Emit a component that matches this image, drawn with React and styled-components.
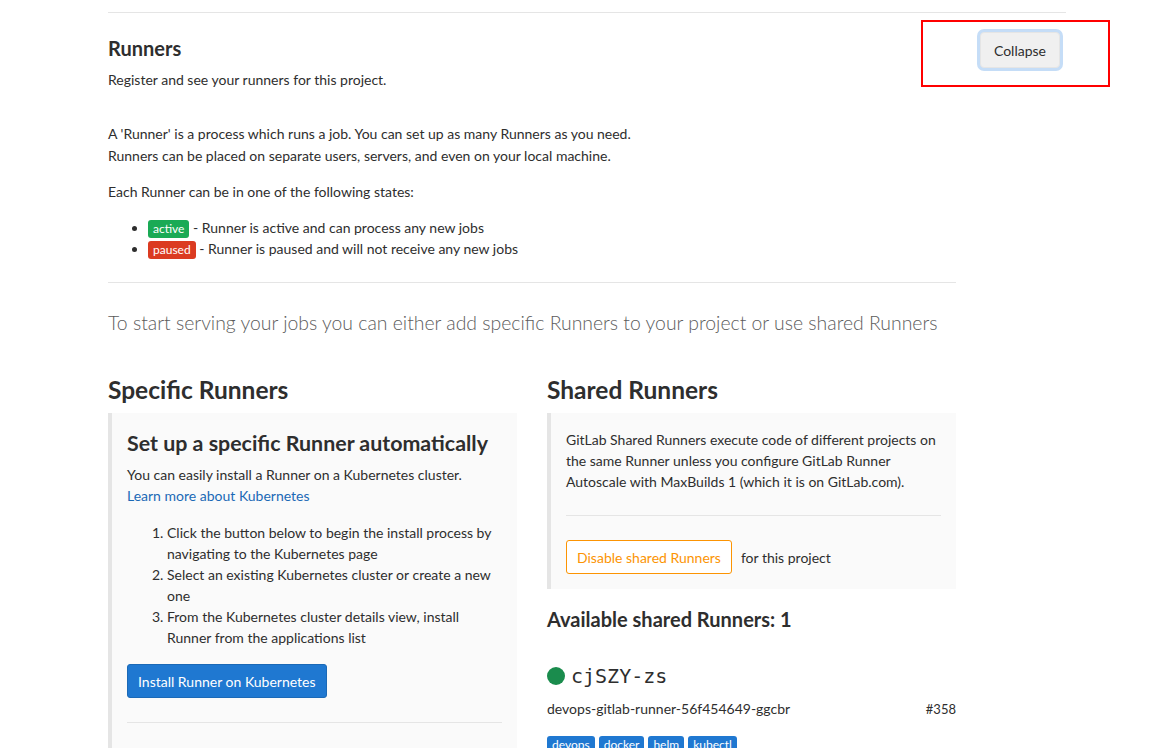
import React from 'react';
import styled, { createGlobalStyle } from 'styled-components';

const GlobalStyle = createGlobalStyle`
  body {
    margin: 0;
    background: #ffffff;
    font-family: Lato, "Noto Sans", sans-serif;
    font-size: 14px;
    color: #2e2e2e;
  }
`;

const Page = styled.div`
  width: 958px;
  margin: 0 0 0 108px;
  padding-top: 12px;
`;

const Section = styled.section`
  position: relative;
  border-top: 1px solid #e5e5e5;
`;

const SectionHeader = styled.div`
  display: flex;
  justify-content: space-between;
  align-items: flex-start;
  padding-top: 21px;
`;

const SectionTitle = styled.h4`
  margin: 0;
  font-size: 20px;
  font-weight: 700;
  line-height: 28px;
`;

const SectionDesc = styled.p`
  margin: 8px 0 0 0;
  line-height: 20px;
`;

const CollapseBtn = styled.button`
  margin: -2px 6px 0 0;
  height: 36px;
  padding: 0 13px;
  font-family: inherit;
  font-size: 14px;
  color: #2e2e2e;
  background: #f0f0f0;
  border: 1px solid #e5e5e5;
  border-radius: 4px;
  box-shadow: 0 0 0 3px #c5ddf7;
`;

const Annotation = styled.div`
  position: absolute;
  left: 813px;
  top: 7px;
  width: 185px;
  height: 63px;
  border: 2px solid #ff0000;
  pointer-events: none;
`;

const Content = styled.div`
  width: 848px;
  padding-top: 33px;
`;

const Para = styled.p`
  margin: 0 0 14px 0;
  line-height: 22px;
`;

const StateList = styled.ul`
  margin: 0;
  padding-left: 40px;
  line-height: 21px;
`;

const Badge = styled.span`
  display: inline-block;
  padding: 0 5px;
  border-radius: 3px;
  color: #ffffff;
  font-size: 12px;
  line-height: 18px;
  background: ${p => p.$color};
`;

const Divider = styled.hr`
  border: 0;
  border-top: 1px solid #e5e5e5;
  margin: ${p => p.$margin || '24px 0'};
`;

const Lead = styled.p`
  margin: 0;
  font-size: 19.4px;
  font-weight: 300;
  color: #5c5c5c;
  line-height: 28px;
`;

const Columns = styled.div`
  display: grid;
  grid-template-columns: 1fr 1fr;
  column-gap: 30px;
  margin-top: 36px;
`;

const Column = styled.div`
  display: flex;
  flex-direction: column;
`;

const ColTitle = styled.h3`
  margin: 0 0 6px 0;
  font-size: 24.5px;
  font-weight: 700;
  line-height: 34px;
`;

const Well = styled.div`
  display: flex;
  flex-direction: column;
  background: #fafafa;
  border-left: 4px solid #e5e5e5;
  padding: ${p => p.$padding || '16px 16px 16px 15px'};
`;

const WellTitle = styled.h4`
  margin: 0 0 6px 0;
  font-size: 21.4px;
  font-weight: 700;
  line-height: 30px;
`;

const WellText = styled.p`
  margin: 0;
  line-height: 21px;
`;

const Link = styled.a`
  color: #1b69b6;
  text-decoration: none;
`;

const Steps = styled.ol`
  margin: 16px 0 16px 0;
  padding-left: 40px;
  line-height: 21px;
`;

const PrimaryBtn = styled.button`
  align-self: flex-start;
  height: 34px;
  padding: 0 10px;
  font-family: inherit;
  font-size: 14px;
  color: #ffffff;
  background: #1f78d1;
  border: 1px solid #1b69b6;
  border-radius: 3px;
`;

const ActionRow = styled.div`
  display: flex;
  align-items: center;
  gap: 9px;
`;

const WarnBtn = styled.button`
  height: 34px;
  padding: 0 10px;
  font-family: inherit;
  font-size: 14px;
  color: #fc9403;
  background: #ffffff;
  border: 1px solid #fc9403;
  border-radius: 3px;
`;

const SubTitle = styled.h4`
  margin: 16px 0 0 0;
  font-size: 20px;
  font-weight: 700;
  line-height: 28px;
`;

const RunnerName = styled.div`
  display: flex;
  align-items: center;
  gap: 6px;
  margin-top: 29px;
  font-family: "DejaVu Sans Mono", "Liberation Mono", monospace;
  font-size: 20px;
  line-height: 28px;
`;

const Dot = styled.span`
  width: 18px;
  height: 18px;
  border-radius: 50%;
  background: #1a8c4d;
`;

const RunnerMeta = styled.div`
  display: flex;
  justify-content: space-between;
  align-items: baseline;
  margin-top: 9px;
  line-height: 20px;
`;

const RunnerId = styled.span`
  font-size: 13px;
`;

const Tags = styled.div`
  display: flex;
  gap: 4px;
  margin-top: 17px;
`;

const Tag = styled.span`
  padding: 0 5px;
  border-radius: 3px;
  color: #ffffff;
  background: #1f78d1;
  font-size: 12px;
  line-height: 18px;
`;

export default function App() {
  return (
    <Page>
      <GlobalStyle />
      <Section>
        <SectionHeader>
          <div>
            <SectionTitle>Runners</SectionTitle>
            <SectionDesc>Register and see your runners for this project.</SectionDesc>
          </div>
          <CollapseBtn>Collapse</CollapseBtn>
        </SectionHeader>
        <Annotation />
        <Content>
          <Para>
            A 'Runner' is a process which runs a job. You can set up as many Runners as you need.
            <br />
            Runners can be placed on separate users, servers, and even on your local machine.
          </Para>
          <Para>Each Runner can be in one of the following states:</Para>
          <StateList>
            <li>
              <Badge $color="#1aaa55">active</Badge> - Runner is active and can process any new jobs
            </li>
            <li>
              <Badge $color="#db3b21">paused</Badge> - Runner is paused and will not receive any new jobs
            </li>
          </StateList>
          <Divider $margin="23px 0 26px 0" />
          <Lead>To start serving your jobs you can either add specific Runners to your project or use shared Runners</Lead>
          <Columns>
            <Column>
              <ColTitle>Specific Runners</ColTitle>
              <Well $padding="15px 15px 30px 15px">
                <WellTitle>Set up a specific Runner automatically</WellTitle>
                <WellText>
                  You can easily install a Runner on a Kubernetes cluster.
                  <br />
                  <Link href="#">Learn more about Kubernetes</Link>
                </WellText>
                <Steps>
                  <li>Click the button below to begin the install process by navigating to the Kubernetes page</li>
                  <li>Select an existing Kubernetes cluster or create a new one</li>
                  <li>From the Kubernetes cluster details view, install Runner from the applications list</li>
                </Steps>
                <PrimaryBtn>Install Runner on Kubernetes</PrimaryBtn>
                <Divider $margin="24px 0 0 0" />
              </Well>
            </Column>
            <Column>
              <ColTitle>Shared Runners</ColTitle>
              <Well $padding="16px 15px 15px 15px">
                <WellText>
                  GitLab Shared Runners execute code of different projects on the same Runner unless you configure GitLab Runner Autoscale with MaxBuilds 1 (which it is on GitLab.com).
                </WellText>
                <Divider $margin="23px 0 24px 0" />
                <ActionRow>
                  <WarnBtn>Disable shared Runners</WarnBtn>
                  <span>for this project</span>
                </ActionRow>
              </Well>
              <SubTitle>Available shared Runners: 1</SubTitle>
              <RunnerName>
                <Dot />
                cjSZY-zs
              </RunnerName>
              <RunnerMeta>
                <span>devops-gitlab-runner-56f454649-ggcbr</span>
                <RunnerId>#358</RunnerId>
              </RunnerMeta>
              <Tags>
                <Tag>devops</Tag>
                <Tag>docker</Tag>
                <Tag>helm</Tag>
                <Tag>kubectl</Tag>
              </Tags>
            </Column>
          </Columns>
        </Content>
      </Section>
    </Page>
  );
}
